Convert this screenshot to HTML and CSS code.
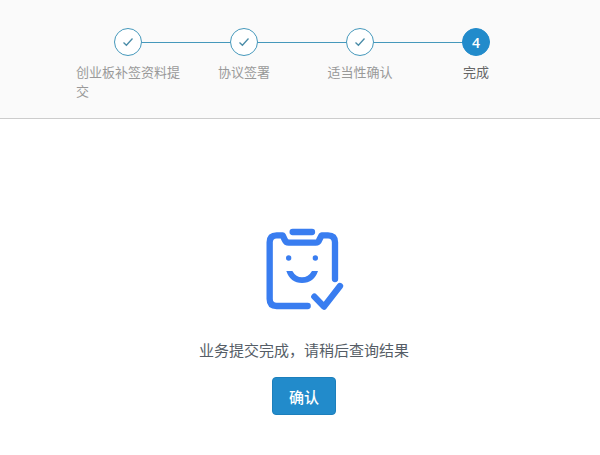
FILE: index.html
```html
<!DOCTYPE html>
<html lang="zh-CN">
<head>
    <meta charset="UTF-8">
    <meta name="viewport" content="width=device-width, initial-scale=1">
    <title>完成</title>
    <link rel="stylesheet" href="styles.css">
</head>
<body>
    <header class="header">
        <ol class="steps">
            <li class="step done">
                <span class="step-icon">
                    <svg width="12" height="10" viewBox="0 0 12 10"><path d="M1.5 5.5 4.4 8.3 10.5 1.5"/></svg>
                </span>
                <span class="step-title">创业板补签资料提交</span>
            </li>
            <li class="step done">
                <span class="step-icon">
                    <svg width="12" height="10" viewBox="0 0 12 10"><path d="M1.5 5.5 4.4 8.3 10.5 1.5"/></svg>
                </span>
                <span class="step-title">协议签署</span>
            </li>
            <li class="step done">
                <span class="step-icon">
                    <svg width="12" height="10" viewBox="0 0 12 10"><path d="M1.5 5.5 4.4 8.3 10.5 1.5"/></svg>
                </span>
                <span class="step-title">适当性确认</span>
            </li>
            <li class="step current">
                <span class="step-icon">4</span>
                <span class="step-title">完成</span>
            </li>
        </ol>
    </header>

    <main class="result">
        <svg class="result-icon" viewBox="42 36 240 252">
            <g class="outline">
                <path d="M173 273H80Q59 273 59 252V82Q59 61 80 61H98L104 74Q108 83 116 83H197Q205 83 208 74L215 61H234Q255 61 255 82V192"/>
                <path d="M128 51H186"/>
                <path d="M193 245 222 275 270 213"/>
            </g>
            <circle cx="116" cy="129" r="8"/>
            <circle cx="196" cy="129" r="8"/>
            <path d="M109 168H127Q138 187 156 187Q175 187 186 168H204Q192 204 156 204Q121 204 109 168Z"/>
        </svg>
        <p class="result-text">业务提交完成，请稍后查询结果</p>
        <button class="btn" type="button">确认</button>
    </main>
</body>
</html>
```
FILE: styles.css
```css
* {
    box-sizing: border-box;
}

body {
    margin: 0;
    background-color: #fff;
    font-family: "Open Sans", "Noto Sans CJK SC", sans-serif;
    color: #555d66;
}

.header {
    min-height: 119px;
    padding: 28px 16px 16px 20px;
    background-color: #fafafa;
    border-bottom: 1px solid #ccc;
}

.steps {
    display: flex;
    max-width: 464px;
    margin: 0 auto;
    padding: 0;
    list-style: none;
}

.step {
    flex: 1;
    display: flex;
    flex-direction: column;
    align-items: center;
    gap: 7px;
}

/* connecting line, drawn behind the circles */
.step.done {
    background: linear-gradient(#4598bb, #4598bb) 100% 14px / 50% 1px no-repeat;
}

.step.done + .step.done {
    background-size: 100% 1px;
}

.step.current {
    background: linear-gradient(#4598bb, #4598bb) 0 14px / 50% 1px no-repeat;
}

.step-icon {
    width: 28px;
    height: 28px;
    display: flex;
    align-items: center;
    justify-content: center;
    border: 1px solid #4598bb;
    border-radius: 50%;
    background-color: #fff;
    font-size: 14px;
    font-weight: 600;
}

.step-icon svg {
    fill: none;
    stroke: #4a8ca8;
    stroke-width: 1.3;
}

.step.current .step-icon {
    border-color: #228bcb;
    background-color: #228bcb;
    color: #fff;
}

.step-title {
    padding: 0 6px;
    font-size: 13px;
    line-height: 19px;
    color: #999;
}

.step.current .step-title {
    color: #666;
}

.result {
    display: flex;
    flex-direction: column;
    align-items: center;
    padding: 108px 16px 40px 24px;
}

.result-icon {
    width: 80px;
    height: 84px;
    fill: #397df0;
}

.outline {
    fill: none;
    stroke: #397df0;
    stroke-width: 19;
    stroke-linecap: round;
    stroke-linejoin: round;
}

.result-text {
    margin: 28px 0 16px;
    font-size: 15px;
    line-height: 22px;
}

.btn {
    height: 38px;
    padding: 0 16px;
    border: 1px solid #1c7fbc;
    border-radius: 4px;
    background-color: #228bcb;
    color: #fff;
    font-family: inherit;
    font-size: 15px;
    font-weight: 500;
    cursor: pointer;
}

.btn:hover {
    background-color: #1c7fbc;
}
```
